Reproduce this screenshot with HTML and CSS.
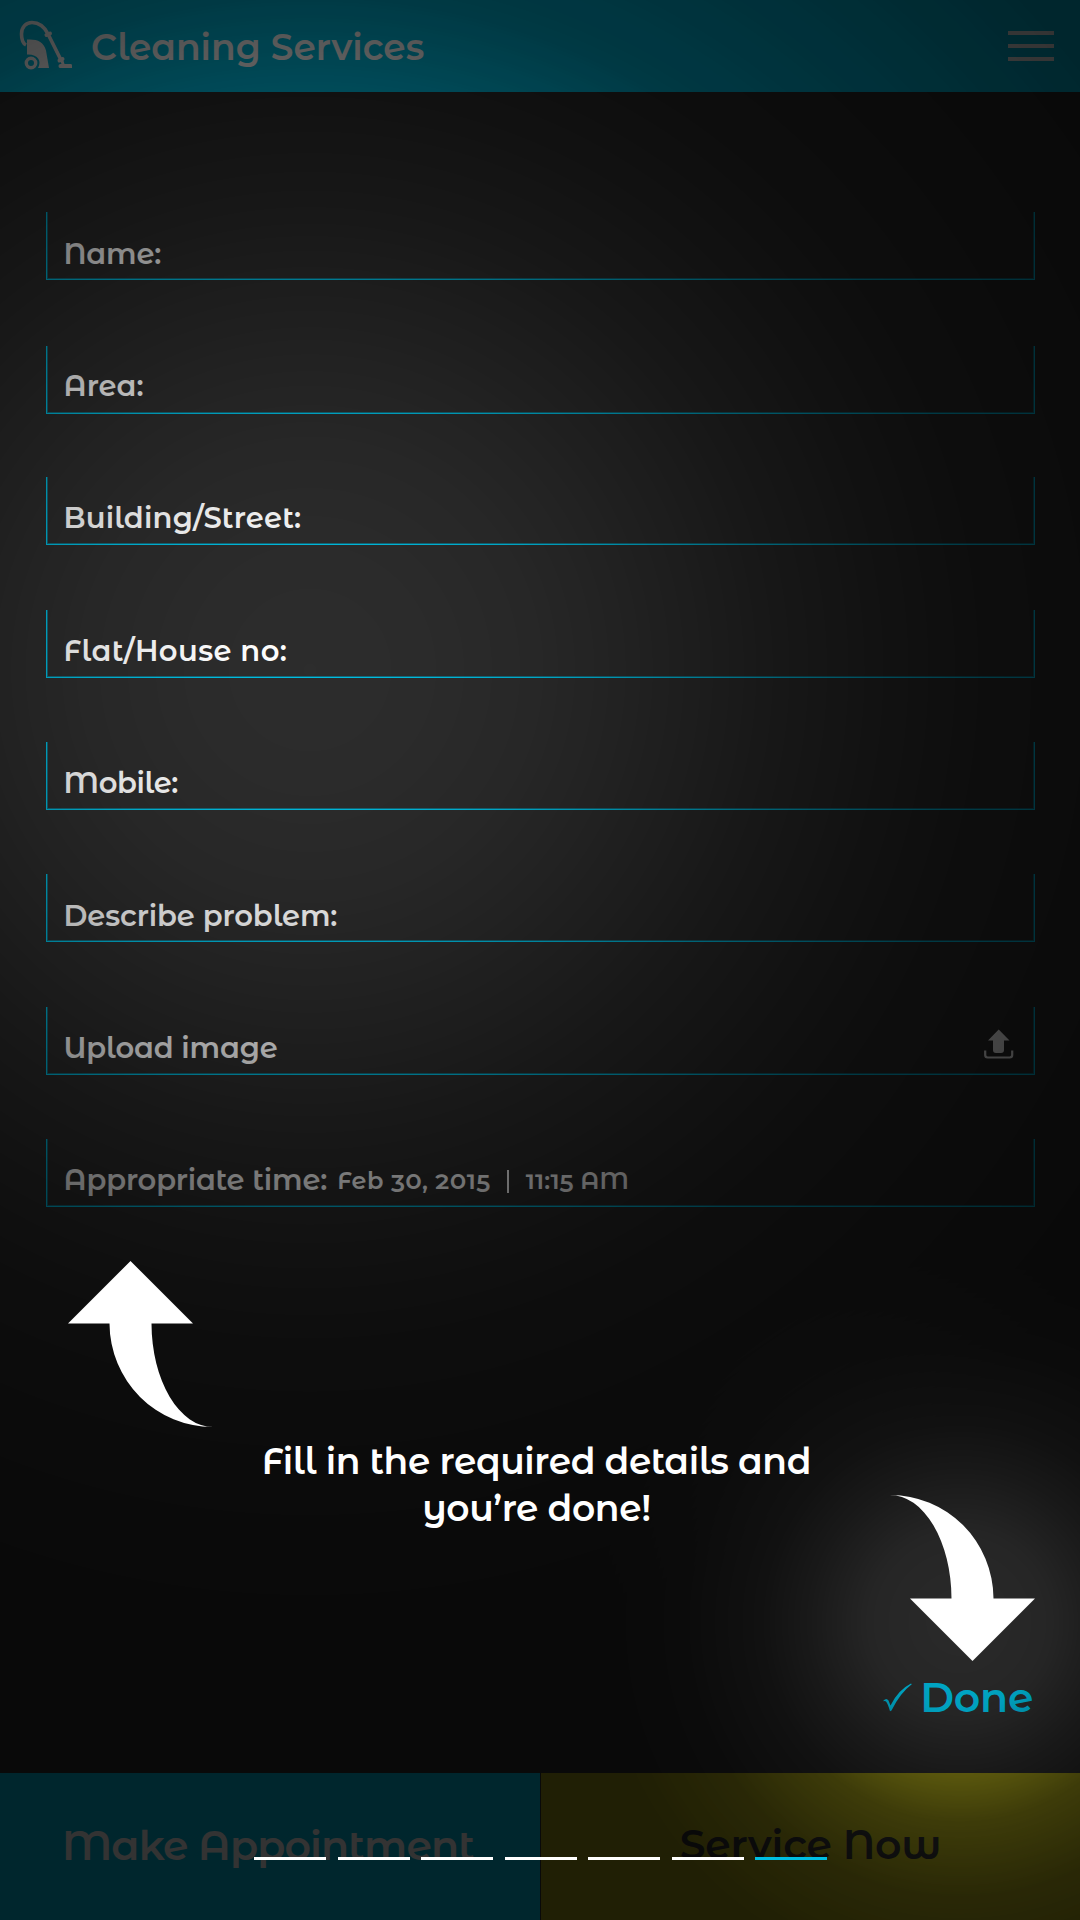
FILE: index.html
```html
<!DOCTYPE html>
<html lang="en">
<head>
<meta charset="utf-8">
<title>Cleaning Services</title>
<link rel="stylesheet" href="styles.css">
</head>
<body>
<div class="screen">
  <header class="topbar">
    <svg class="logo" viewBox="0 0 56 54" width="56" height="54">
      <path class="hose" d="M8 26C4 24 3.500 18 3.500 15C3.500 8 8 3.500 14 3.500C22 3.500 27 9 30 15L43 41"/>
      <path class="joint" d="M28.500 16l3.500-1.500M41.500 41.500l3-1.500"/>
      <path class="solid" d="M9 20.500h3c8 0 14 3 16 11l3 17.500H20c4-7 0-14-11-13.500z"/>
      <circle class="wheel" cx="13" cy="44" r="4.700"/>
      <path class="solid" d="M42 41.500l3-1.500 1.500 5H53q1 0 1 1.500V49H42q-1.500 0-1.500-2t2-2h1z"/>
    </svg>
    <h1 class="title">Cleaning Services</h1>
    <button class="menu" aria-label="Menu"><i></i><i></i><i></i></button>
  </header>
  <main class="form">
    <label class="field"><span class="w-name">Name:</span></label>
    <label class="field"><span class="w-area">Area:</span></label>
    <label class="field"><span class="w-building">Building/Street:</span></label>
    <label class="field"><span class="w-flat">Flat/House no:</span></label>
    <label class="field"><span class="w-mobile">Mobile:</span></label>
    <label class="field"><span class="w-problem">Describe problem:</span></label>
    <label class="field"><span class="w-upload">Upload image</span>
      <svg class="upload" viewBox="0 0 30 30" width="30" height="30">
        <path class="solid" d="M14.700 .5L25.500 11.500H20V21q0 3-3 3h-5q-3 0-3-3v-9.500H4z"/>
        <path class="tray" d="M1.200 21.500V26q0 2.500 2.500 2.500h22q2.500 0 2.500-2.500v-4.500"/>
      </svg>
    </label>
    <label class="field"><span class="w-time">Appropriate time:</span><small class="when"><span class="w-date">Feb 30, 2015</span><i class="bar"></i><span class="w-hour">11:15 AM</span></small></label>
    <button class="done">
      <svg viewBox="0 0 30 30" width="30" height="30"><path class="check" d="M.5 18.500q3-3 5 0l2 5Q15 8 28 1.500l.8.7Q17 11 8.500 28.500l-1.500.8Q5 22 3 19.500q-1-1-2.500-.2z"/></svg>
      <span class="w-done">Done</span>
    </button>
  </main>
  <footer class="actions">
    <button class="book">Make Appointment</button>
    <button class="now">Service Now</button>
  </footer>

  <div class="shade"></div>
  <div class="coach">
    <svg class="arrow arrow-up" viewBox="0 0 145 166" width="145" height="166"><path d="M62.500 0L125 62.500H83.500A61.500 104 0 0 0 145 166A103 104 0 0 1 41.500 62.500H0z"/></svg>
    <p class="hint">Fill in the required details and<br>you’re done!</p>
    <svg class="arrow arrow-down" viewBox="0 0 145 166" width="145" height="166"><path d="M62.500 0L125 62.500H83.500A61.500 104 0 0 0 145 166A103 104 0 0 1 41.500 62.500H0z"/></svg>
    <div class="steps"><i></i><i></i><i></i><i></i><i></i><i></i><i class="current"></i></div>
  </div>
</div>
</body>
</html>
```
FILE: styles.css
```css
* { box-sizing: border-box; }
body { margin: 0; background: #2d2d2d; }
button { border: 0; padding: 0; background: none; font: inherit; color: inherit; letter-spacing: inherit; }

.screen {
  position: relative;
  display: flex;
  flex-direction: column;
  width: 1080px;
  height: 1920px;
  overflow: hidden;
  background: #2d2d2d;
  color: #fff;
  font-family: "Montserrat Alternates", Inter, "Open Sans", sans-serif;
  font-weight: 600;
  font-variant-numeric: oldstyle-nums;
}

.topbar {
  display: flex;
  align-items: center;
  height: 92px;
  padding: 0 26px 0 18px;
  background: #00bee1;
}
.logo { margin-top: -1px; }
.solid { fill: #fff; }
.hose { fill: none; stroke: #fff; stroke-width: 3.6; }
.joint { fill: none; stroke: #fff; stroke-width: 4; stroke-linecap: round; }
.wheel { fill: none; stroke: #fff; stroke-width: 3.4; }
.title { margin: 1px auto 0 17px; font-size: 36px; line-height: 46px; font-weight: 600; }
.menu { display: flex; flex-direction: column; gap: 9px; }
.menu i { width: 46px; height: 4px; background: #fff; }

.form {
  flex: 1;
  display: flex;
  flex-direction: column;
  padding: 120px 45px 0 46px;
}
.field {
  display: flex;
  align-items: flex-start;
  height: 68px;
  margin-bottom: 64px;
  padding: 21px 20px 0 16.5px;
  border: 1px solid #00bee1;
  border-top: 0;
  box-shadow: inset 1px -1px #17697a, inset -1px 0 #17697a;
  font-size: 29px;
  line-height: 40px;
}
.field:nth-child(1) { margin-bottom: 66px; padding-top: 22px; }
.field:nth-child(2) { margin-bottom: 63px; padding-top: 20px; }
.field:nth-child(3), .field:nth-child(6) { margin-bottom: 65px; }
.field:nth-child(6) { padding-top: 22px; }
.w-name { letter-spacing: -.25px; }
.w-area { letter-spacing: 0; }
.w-building { letter-spacing: .18px; }
.w-flat { letter-spacing: .4px; }
.w-mobile { letter-spacing: -.35px; }
.w-problem { letter-spacing: -.1px; }
.w-upload { letter-spacing: -.15px; }
.w-time { letter-spacing: -.18px; }
.w-date { letter-spacing: .45px; }
.upload { margin: 1px 0 0 auto; }
.tray { fill: none; stroke: #fff; stroke-width: 2.2; }
.when { display: flex; align-items: center; margin-left: 10px; font-size: 24px; line-height: 42px; }
.bar { width: 2px; height: 23px; margin: 0 17px 0 16px; background: #fff; }

.done {
  display: flex;
  align-items: center;
  align-self: flex-end;
  gap: 7px;
  margin: 401px 2px 0 0;
  color: #00bee1;
  font-size: 41px;
  line-height: 50px;
  letter-spacing: -.35px;
}
.check { fill: #00bee1; }

.actions { display: grid; grid-template-columns: 540px 539px; gap: 1px; height: 147px; font-size: 41px; }
.book { padding: 0 4px 4px 0; background: #00bee1; letter-spacing: -.85px; }
.now { padding: 0 0 5px; background: #a09b19; color: #2d2d2d; letter-spacing: -.25px; }

/* Dims the page except for two soft spotlights */
.shade {
  position: absolute;
  inset: 0;
  background: rgba(0, 0, 0, .8);
  mask-image:
    radial-gradient(circle at 310px 670px, rgba(0,0,0,0) 0, rgba(0,0,0,.03) 100px, rgba(0,0,0,.15) 220px, rgba(0,0,0,.28) 300px, rgba(0,0,0,.42) 375px, rgba(0,0,0,.6) 470px, rgba(0,0,0,.76) 580px, rgba(0,0,0,.88) 680px, rgba(0,0,0,.93) 800px, #000 980px),
    radial-gradient(circle at 960px 1622px, rgba(0,0,0,.06) 0, rgba(0,0,0,.2) 90px, rgba(0,0,0,.54) 150px, rgba(0,0,0,.77) 200px, rgba(0,0,0,.93) 275px, #000 360px);
  mask-composite: intersect;
}

.coach { position: absolute; inset: 0; }
.arrow { position: absolute; fill: #fff; }
.arrow-up { left: 67.500px; top: 1261px; }
.arrow-down { right: 45px; top: 1495px; transform: rotate(180deg); }
.hint {
  position: absolute;
  left: 256.500px;
  top: 1438px;
  width: 560px;
  margin: 0;
  font-size: 36px;
  line-height: 47px;
  letter-spacing: -.39px;
  text-align: center;
  white-space: nowrap;
}
.steps { position: absolute; left: 254px; top: 1857px; display: flex; gap: 11.5px; }
.steps i { width: 72px; height: 3px; background: #fff; }
.steps .current { background: #00bee1; }
```
